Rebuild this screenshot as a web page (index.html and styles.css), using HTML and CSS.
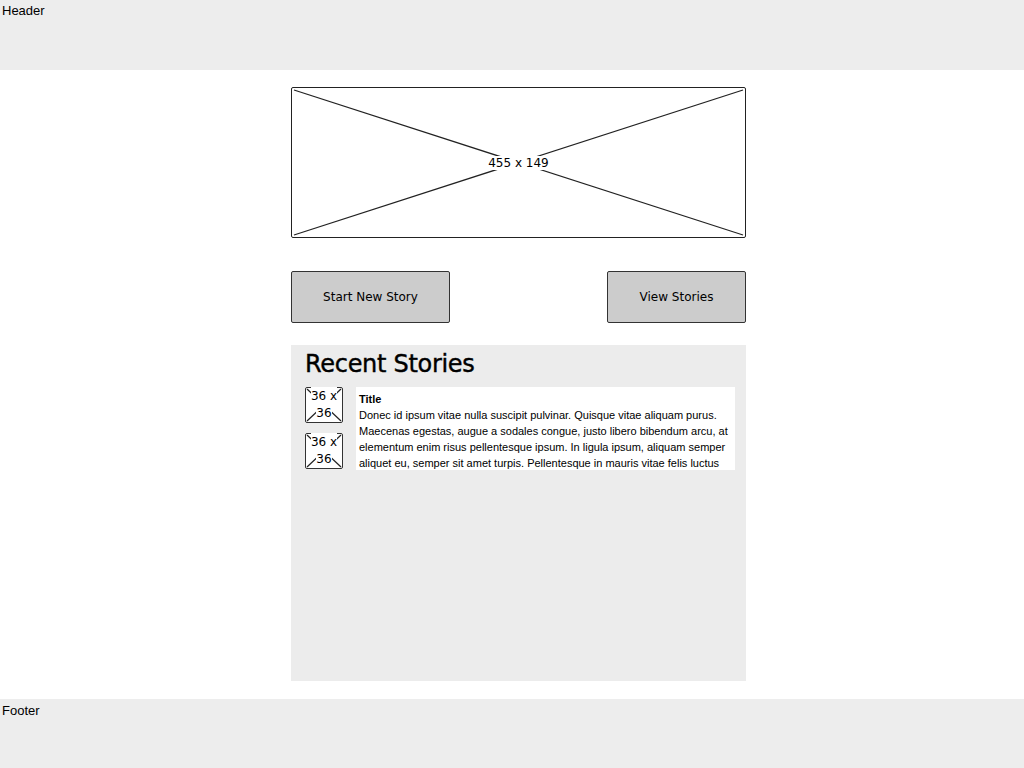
FILE: index.html
```html
<!DOCTYPE html>
<html>
<head>
    <meta charset="UTF-8">
    <title>Stories</title>
    <link rel="stylesheet" href="styles.css">
</head>
<body>
    <div class="header">Header</div>

    <div class="main">
        <!-- banner placeholder -->
        <div class="banner">
            <svg class="cross" viewBox="0 0 453 149" preserveAspectRatio="none">
                <line x1="2" y1="2" x2="451" y2="147" />
                <line x1="451" y1="2" x2="2" y2="147" />
            </svg>
            <span class="banner-label">455 x 149</span>
        </div>

        <div class="actions">
            <a href="javascript:;" class="btn btn-start">Start New Story</a>
            <a href="javascript:;" class="btn btn-view">View Stories</a>
        </div>

        <div class="recent">
            <h2>Recent Stories</h2>
            <div class="recent-body">
                <div class="thumbs">
                    <div class="thumb">
                        <svg viewBox="0 0 36 34" preserveAspectRatio="none">
                            <line x1="1" y1="1" x2="35" y2="33" />
                            <line x1="35" y1="1" x2="1" y2="33" />
                        </svg>
                        <div class="t-label"><span>36 x</span><br><span>36</span></div>
                    </div>
                    <div class="thumb">
                        <svg viewBox="0 0 36 34" preserveAspectRatio="none">
                            <line x1="1" y1="1" x2="35" y2="33" />
                            <line x1="35" y1="1" x2="1" y2="33" />
                        </svg>
                        <div class="t-label"><span>36 x</span><br><span>36</span></div>
                    </div>
                </div>
                <div class="story">
                    <b>Title</b><br>
                    Donec id ipsum vitae nulla suscipit pulvinar. Quisque vitae aliquam purus. Maecenas egestas, augue a sodales congue, justo libero bibendum arcu, at elementum enim risus pellentesque ipsum. In ligula ipsum, aliquam semper aliquet eu, semper sit amet turpis. Pellentesque in mauris vitae felis luctus
                </div>
            </div>
        </div>
    </div>

    <div class="footer">Footer</div>
</body>
</html>
```

FILE: styles.css
```css
* {
    margin: 0;
    padding: 0;
}
body {
    font-family: "Liberation Sans", Arial, sans-serif;
    font-size: 13px;
    color: #000;
    background: #fff;
}
a {
    text-decoration: none;
    color: #000;
}
.header {
    height: 70px;
    padding: 3px 2px 0;
    box-sizing: border-box;
    background-color: #ededed;
}
.footer {
    height: 69px;
    margin-top: 18px;
    padding: 4px 2px 0;
    box-sizing: border-box;
    background-color: #ededed;
}
.main {
    width: 455px;
    margin: 17px 0 0 291px;
}

/* banner */
.banner {
    position: relative;
    height: 149px;
    border: 1px solid #222;
    border-radius: 2px;
    display: flex;
    align-items: center;
    justify-content: center;
}
.cross {
    position: absolute;
    left: 0;
    top: 0;
    width: 100%;
    height: 100%;
}
.cross line,
.thumb line {
    stroke: #222;
    stroke-width: 1.2;
}
.banner-label {
    position: relative;
    background: #fff;
    padding: 0 2px;
    font-family: "DejaVu Sans", sans-serif;
    font-size: 12px;
}

/* buttons */
.actions {
    display: flex;
    justify-content: space-between;
    margin-top: 33px;
}
.btn {
    display: flex;
    align-items: center;
    justify-content: center;
    height: 50px;
    border: 1px solid #333;
    border-radius: 2px;
    background-color: #cccccc;
    font-family: "DejaVu Sans", sans-serif;
    font-size: 12px;
}
.btn-start {
    width: 157px;
}
.btn-view {
    width: 137px;
}

/* recent stories */
.recent {
    height: 336px;
    margin-top: 22px;
    padding: 4px 11px 0 14px;
    box-sizing: border-box;
    background-color: #ececec;
}
.recent h2 {
    font-family: "DejaVu Sans", sans-serif;
    font-weight: normal;
    font-size: 24px;
    line-height: 30px;
    letter-spacing: -0.3px;
    -webkit-text-stroke: 0.4px #000;
}
.recent-body {
    display: flex;
    gap: 13px;
    margin-top: 8px;
}
.thumbs {
    display: flex;
    flex-direction: column;
    gap: 10px;
}
.thumb {
    position: relative;
    width: 36px;
    height: 34px;
    border: 1px solid #333;
    border-radius: 2px;
    background: #fff;
    display: flex;
    align-items: center;
    justify-content: center;
    font-family: "DejaVu Sans", sans-serif;
    font-size: 12px;
}
.thumb svg {
    position: absolute;
    left: 0;
    top: 0;
    width: 100%;
    height: 100%;
}
.t-label {
    position: relative;
    text-align: center;
    white-space: nowrap;
    line-height: 17px;
}
.t-label span {
    background: #fff;
    padding: 2px 0;
}
.story {
    flex: 1;
    height: 83px;
    overflow: hidden;
    padding: 4px 3px 0;
    box-sizing: border-box;
    background: #fff;
    font-size: 11px;
    line-height: 16px;
}
```
